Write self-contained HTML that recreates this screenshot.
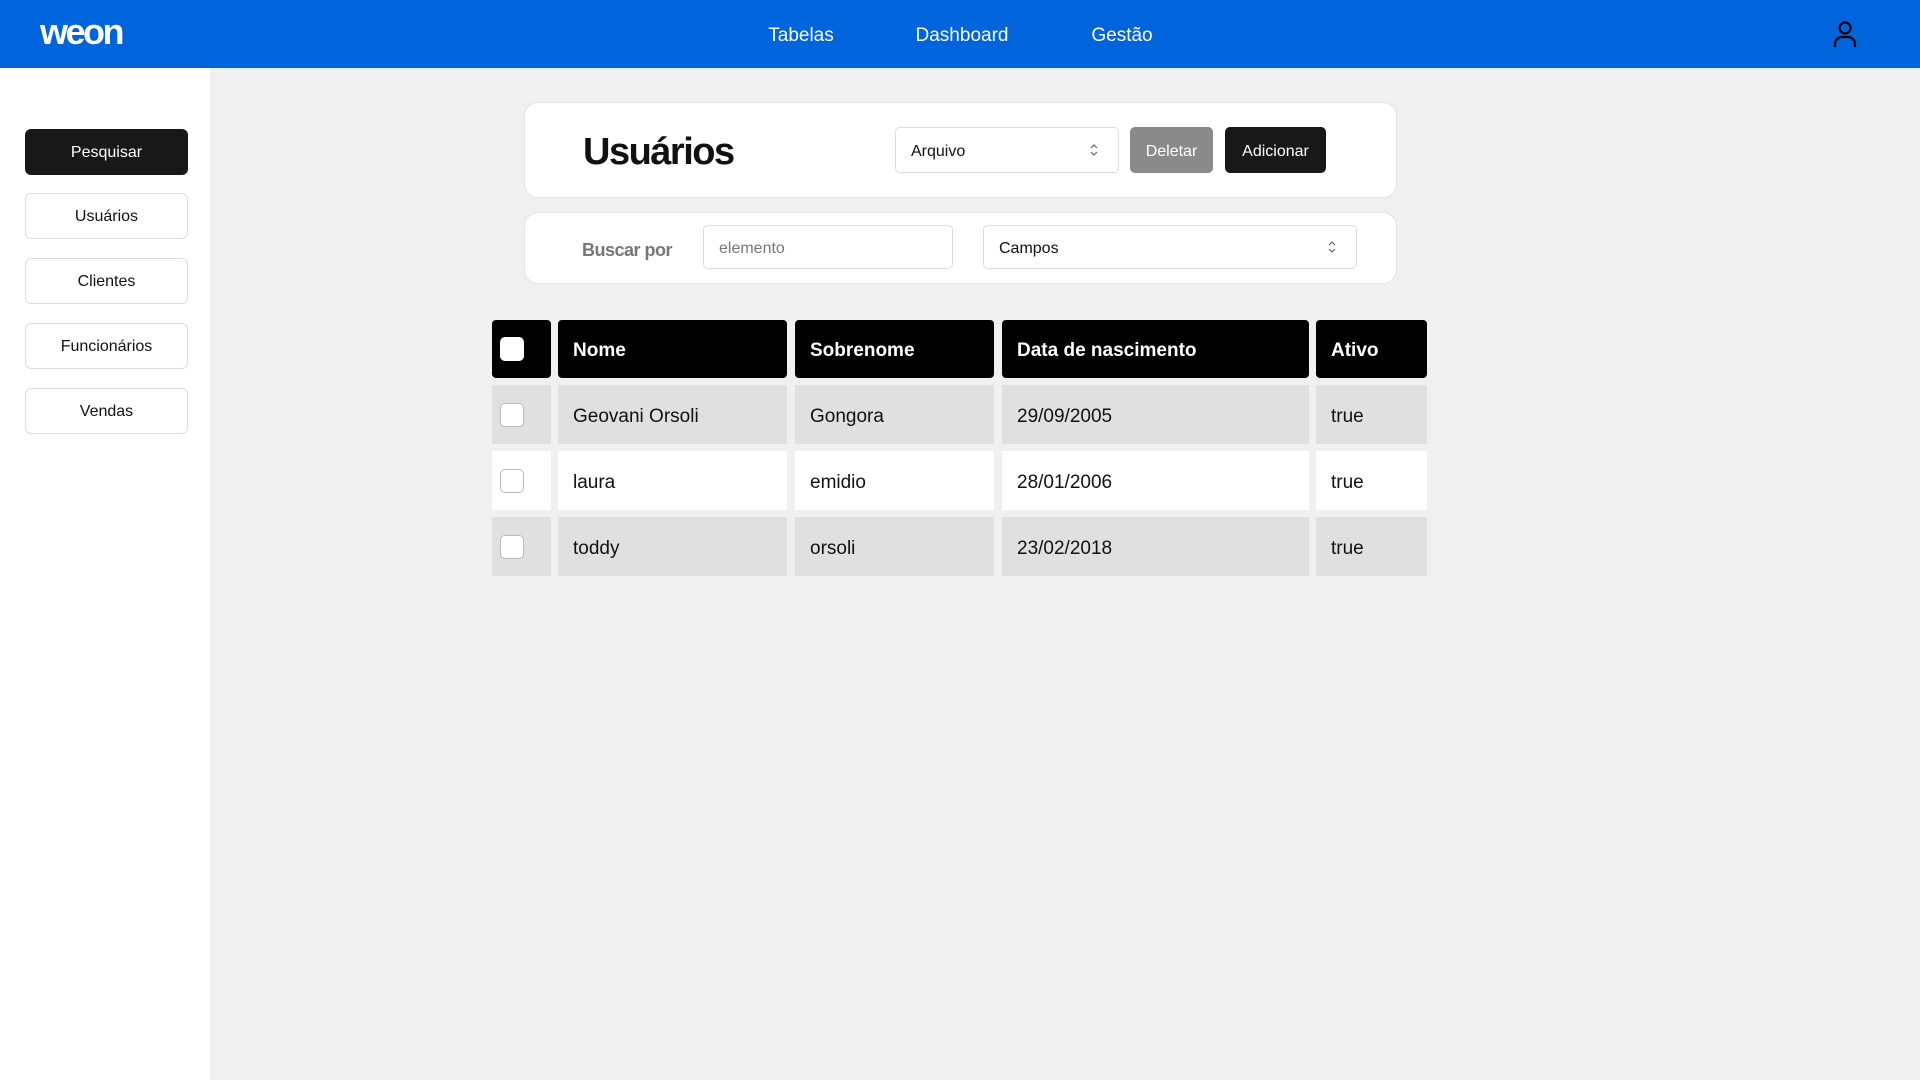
<!DOCTYPE html>
<html><head><meta charset="utf-8"><style>
*{box-sizing:border-box;margin:0;padding:0}
body{width:1920px;height:1080px;background:#f0f0f0;font-family:"Liberation Sans",sans-serif;position:relative;overflow:hidden;color:#111}
.hdr{position:absolute;left:0;top:0;width:1920px;height:68px;background:#0064dc}
.logo{position:absolute;left:40px;top:11px;color:#fff;font-weight:bold;font-size:36px;letter-spacing:-2.5px}
.nav{position:absolute;top:25px;color:#fff;font-size:19px;transform:translateX(-50%)}
.side{position:absolute;left:0;top:68px;width:210px;height:1012px;background:#fff}
.sb{position:absolute;left:25px;width:163px;height:46px;border:1px solid #ddd;border-radius:6px;background:#fff;display:flex;align-items:center;justify-content:center;font-size:16px;padding-top:2px}
.card{position:absolute;background:#fff;border:1px solid #e2e2e2;border-radius:14px}
.abs{position:absolute}
.sel{position:absolute;background:#fff;border:1px solid #ddd;border-radius:5px;font-size:16px;display:flex;align-items:center;padding-left:15px;padding-top:3px}
.arr{position:absolute;right:20px;top:50%;margin-top:-7px}
.btn{position:absolute;border-radius:5px;color:#fff;font-size:16px;display:flex;align-items:center;justify-content:center;padding-top:3px}
.c{position:absolute;display:flex;align-items:center;padding-left:15px;font-size:19px;padding-top:4px}
.h{background:#000;color:#fff;font-weight:bold;border-radius:4px}
.g{background:#e0e0e0}.w{background:#fff}
.cb{width:24px;height:24px;border:1px solid #bbb;border-radius:5px;background:#fff;margin-left:-7px;margin-top:-4px}
</style></head><body>
<div class="hdr">
<div class="logo">weon</div>
<div class="nav" style="left:801px">Tabelas</div>
<div class="nav" style="left:962px">Dashboard</div>
<div class="nav" style="left:1122px">Gestão</div>
<svg class="abs" style="left:1832px;top:20px" width="26" height="28" viewBox="0 0 26 28" fill="none" stroke="#000" stroke-width="2.2"><circle cx="13" cy="8" r="5.5"/><path d="M3 27v-3a7 7 0 0 1 7-7h6a7 7 0 0 1 7 7v3"/></svg>
</div>
<div class="side">
<div class="sb" style="top:61px;background:#181818;color:#fff;border-color:#181818">Pesquisar</div>
<div class="sb" style="top:125px">Usuários</div>
<div class="sb" style="top:190px">Clientes</div>
<div class="sb" style="top:255px">Funcionários</div>
<div class="sb" style="top:320px">Vendas</div>
</div>
<div class="card" style="left:524px;top:102px;width:873px;height:96px"></div>
<div class="abs" style="left:583px;top:131px;font-size:38px;font-weight:bold;letter-spacing:-1.5px">Usuários</div>
<div class="sel" style="left:895px;top:127px;width:224px;height:46px">Arquivo<svg class="arr" width="8" height="14" viewBox="0 0 8 14" fill="none" stroke="#666" stroke-width="1.2"><path d="M1 5l3-3 3 3M1 9l3 3 3-3"/></svg></div>
<div class="btn" style="left:1130px;top:127px;width:83px;height:46px;background:#8a8a8a">Deletar</div>
<div class="btn" style="left:1225px;top:127px;width:101px;height:46px;background:#181818">Adicionar</div>
<div class="card" style="left:524px;top:212px;width:873px;height:72px"></div>
<div class="abs" style="left:582px;top:240px;font-size:18px;font-weight:bold;color:#777;letter-spacing:-0.5px">Buscar por</div>
<div class="sel" style="left:703px;top:225px;width:250px;height:44px;color:#777">elemento</div>
<div class="sel" style="left:983px;top:225px;width:374px;height:44px">Campos<svg class="arr" width="8" height="14" viewBox="0 0 8 14" fill="none" stroke="#666" stroke-width="1.2"><path d="M1 5l3-3 3 3M1 9l3 3 3-3"/></svg></div>

<div class="c h" style="left:492px;top:320px;width:59px;height:58px"><div class="cb" style="border:none"></div></div>
<div class="c h" style="left:558px;top:320px;width:229px;height:58px">Nome</div>
<div class="c h" style="left:795px;top:320px;width:199px;height:58px">Sobrenome</div>
<div class="c h" style="left:1002px;top:320px;width:307px;height:58px">Data de nascimento</div>
<div class="c h" style="left:1316px;top:320px;width:111px;height:58px">Ativo</div>

<div class="c g" style="left:492px;top:385px;width:59px;height:59px"><div class="cb"></div></div>
<div class="c g" style="left:558px;top:385px;width:229px;height:59px">Geovani Orsoli</div>
<div class="c g" style="left:795px;top:385px;width:199px;height:59px">Gongora</div>
<div class="c g" style="left:1002px;top:385px;width:307px;height:59px">29/09/2005</div>
<div class="c g" style="left:1316px;top:385px;width:111px;height:59px">true</div>

<div class="c w" style="left:492px;top:451px;width:59px;height:59px"><div class="cb"></div></div>
<div class="c w" style="left:558px;top:451px;width:229px;height:59px">laura</div>
<div class="c w" style="left:795px;top:451px;width:199px;height:59px">emidio</div>
<div class="c w" style="left:1002px;top:451px;width:307px;height:59px">28/01/2006</div>
<div class="c w" style="left:1316px;top:451px;width:111px;height:59px">true</div>

<div class="c g" style="left:492px;top:517px;width:59px;height:59px"><div class="cb"></div></div>
<div class="c g" style="left:558px;top:517px;width:229px;height:59px">toddy</div>
<div class="c g" style="left:795px;top:517px;width:199px;height:59px">orsoli</div>
<div class="c g" style="left:1002px;top:517px;width:307px;height:59px">23/02/2018</div>
<div class="c g" style="left:1316px;top:517px;width:111px;height:59px">true</div>
</body></html>
